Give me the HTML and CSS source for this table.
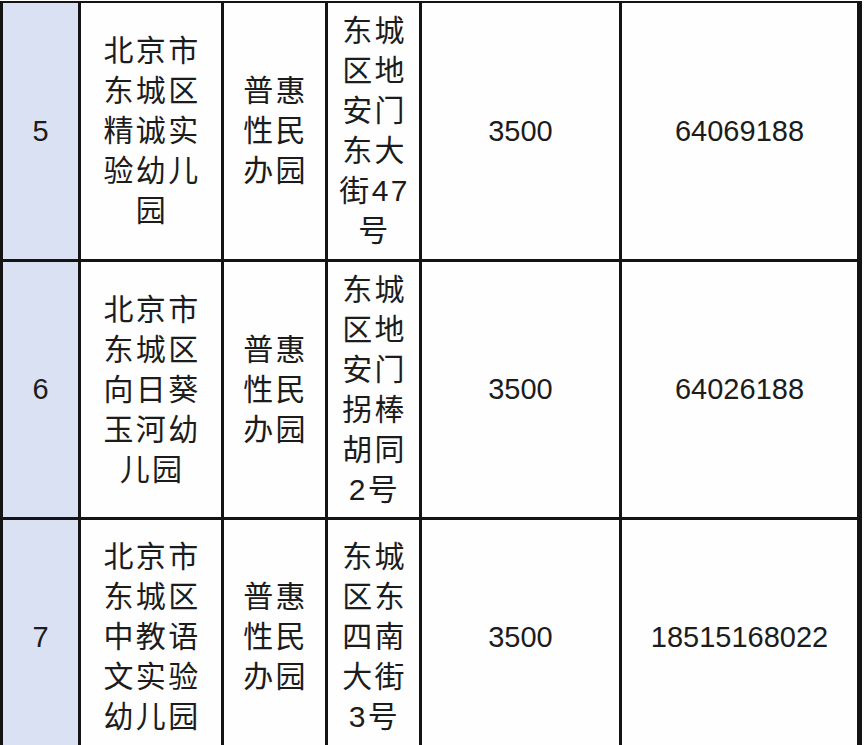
FILE: index.html
```html
<!DOCTYPE html>
<html lang="zh-CN">
<head>
<meta charset="utf-8">
<title>幼儿园名单</title>
<link rel="stylesheet" href="styles.css">
</head>
<body>
<div class="table">
  <div class="cell idx">5</div>
  <div class="cell cjk">北京市<br>东城区<br>精诚实<br>验幼儿<br>园</div>
  <div class="cell cjk">普惠<br>性民<br>办园</div>
  <div class="cell cjk">东城<br>区地<br>安门<br>东大<br>街47<br>号</div>
  <div class="cell num">3500</div>
  <div class="cell num">64069188</div>

  <div class="cell idx">6</div>
  <div class="cell cjk">北京市<br>东城区<br>向日葵<br>玉河幼<br>儿园</div>
  <div class="cell cjk">普惠<br>性民<br>办园</div>
  <div class="cell cjk">东城<br>区地<br>安门<br>拐棒<br>胡同<br>2号</div>
  <div class="cell num">3500</div>
  <div class="cell num">64026188</div>

  <div class="cell idx">7</div>
  <div class="cell cjk">北京市<br>东城区<br>中教语<br>文实验<br>幼儿园</div>
  <div class="cell cjk">普惠<br>性民<br>办园</div>
  <div class="cell cjk">东城<br>区东<br>四南<br>大街<br>3号</div>
  <div class="cell num">3500</div>
  <div class="cell num">18515168022</div>
</div>
</body>
</html>
```
FILE: styles.css
```css
html, body {
  margin: 0;
  padding: 0;
  background: #ffffff;
  overflow: hidden;
}

.table {
  display: grid;
  grid-template-columns: 75px 140px 101px 91px 197px 235px;
  grid-template-rows: 256px 255px 234px;
  gap: 3px;
  width: 856px;
  margin-top: 1px;
  padding: 2px 3px 3px 3px;
  background: #141414;
  font-family: "Liberation Sans", "Noto Sans CJK SC", sans-serif;
  color: #1c1c1c;
}

.cell {
  background: #fefefe;
  display: flex;
  align-items: center;
  justify-content: center;
  text-align: center;
}

.idx {
  background: #dae1f3;
  font-size: 29px;
}

.cjk {
  font-size: 30px;
  line-height: 40px;
  letter-spacing: 2.3px;
  padding-left: 2px;
}

.num {
  font-size: 29px;
}
```
